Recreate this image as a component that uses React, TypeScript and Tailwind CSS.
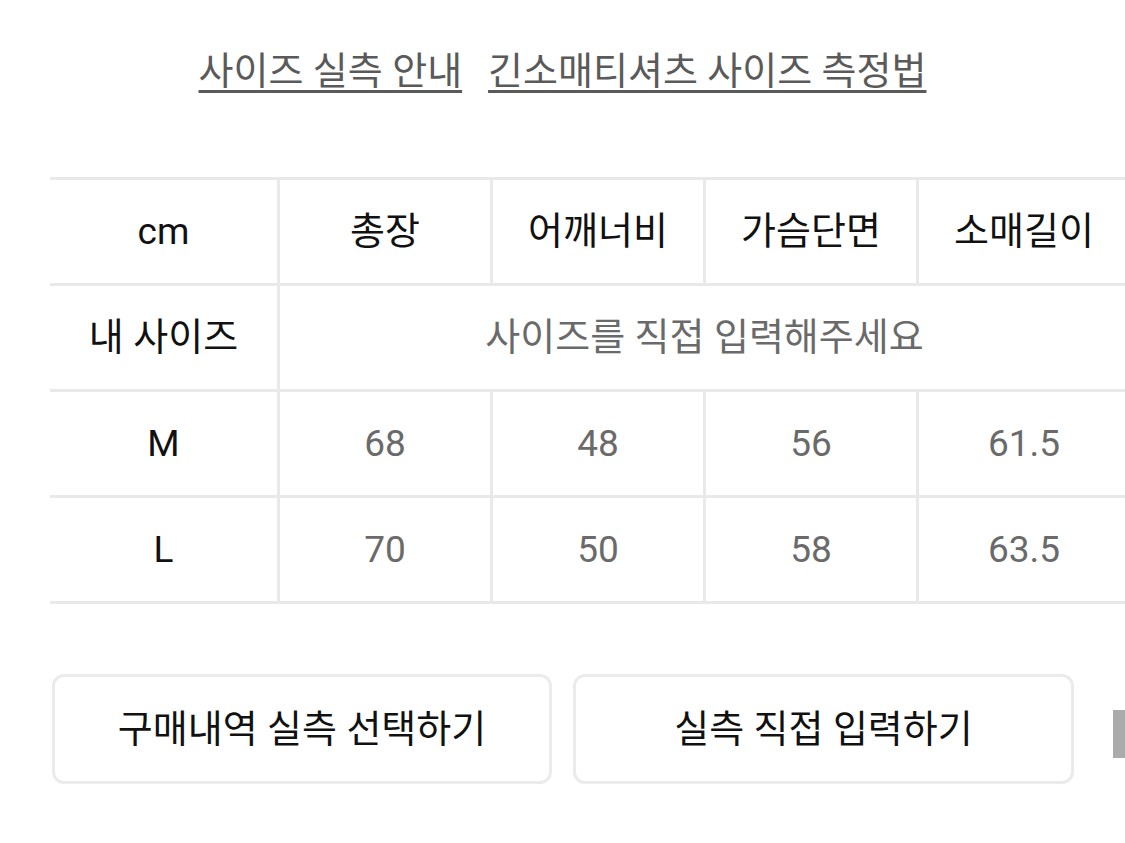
import React from "react";

const font = { fontFamily: 'Roboto, "Noto Sans CJK KR", sans-serif' };

const cols = ["총장", "어깨너비", "가슴단면", "소매길이"];
const rows = [
  { size: "M", vals: ["68", "48", "56", "61.5"] },
  { size: "L", vals: ["70", "50", "58", "63.5"] },
];

export default function App() {
  return (
    <div className="w-[1125px] h-[843px] bg-white overflow-hidden relative" style={font}>
      <div className="flex justify-center gap-[26px] pt-[47px] h-[177px]">
        <span className="text-[38px] leading-[48px] h-[50px] text-[#5a5a5a] underline decoration-[3px] underline-offset-[6px] decoration-[#5a5a5a]">
          사이즈 실측 안내
        </span>
        <span className="text-[38px] leading-[48px] h-[50px] text-[#5a5a5a] underline decoration-[3px] underline-offset-[6px] decoration-[#5a5a5a]">
          긴소매티셔츠 사이즈 측정법
        </span>
      </div>
      <div className="ml-[50px] w-[1080px] border-t-[3px] border-[#e9e9e9]">
        <div className="grid grid-cols-[227px_repeat(4,213px)] h-[106px] border-b-[3px] border-[#e9e9e9]">
          <div className="flex items-center justify-center text-[37px] text-[#111]">cm</div>
          {cols.map((c) => (
            <div key={c} className="flex items-center justify-center text-[38px] text-[#111] border-l-[3px] border-[#e9e9e9]">
              {c}
            </div>
          ))}
        </div>
        <div className="grid grid-cols-[227px_852px] h-[106px] border-b-[3px] border-[#e9e9e9]">
          <div className="flex items-center justify-center text-[38px] text-[#111]">내 사이즈</div>
          <div className="flex items-center justify-center text-[38px] text-[#6a6a6a] border-l-[3px] border-[#e9e9e9]">
            사이즈를 직접 입력해주세요
          </div>
        </div>
        {rows.map((r) => (
          <div key={r.size} className="grid grid-cols-[227px_repeat(4,213px)] h-[106px] border-b-[3px] border-[#e9e9e9]">
            <div className="flex items-center justify-center text-[37px] text-[#111]">{r.size}</div>
            {r.vals.map((v, i) => (
              <div key={i} className="flex items-center justify-center text-[37px] text-[#6a6a6a] border-l-[3px] border-[#e9e9e9]">
                {v}
              </div>
            ))}
          </div>
        ))}
      </div>
      <div className="flex items-center gap-[21px] ml-[52px] mt-[70px]">
        <div className="w-[500px] h-[110px] rounded-[12px] border-[3px] border-[#ebebeb] flex items-center justify-center text-[38px] text-[#111]">
          구매내역 실측 선택하기
        </div>
        <div className="w-[501px] h-[110px] rounded-[12px] border-[3px] border-[#ebebeb] flex items-center justify-center text-[38px] text-[#111]">
          실측 직접 입력하기
        </div>
      </div>
      <div className="absolute left-[1113px] top-[710px] w-[12px] h-[48px] bg-[#ababab]" />
    </div>
  );
}
